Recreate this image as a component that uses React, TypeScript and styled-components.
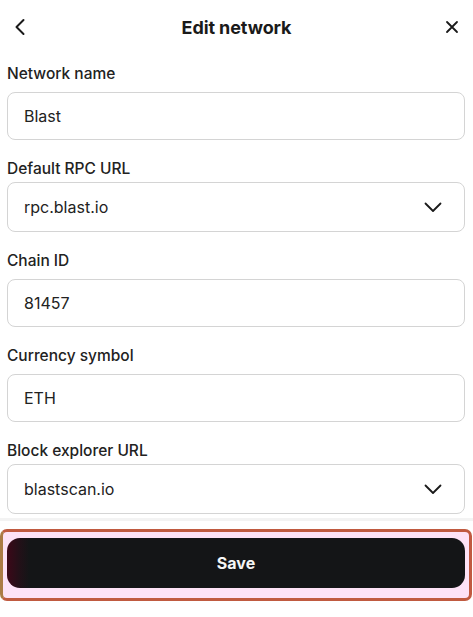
import React, { FunctionComponent } from 'react'
import styled, { createGlobalStyle } from 'styled-components'

const GlobalStyle = createGlobalStyle`
  html, body {
    margin: 0;
    padding: 0;
    background: #fff;
  }
  body {
    font-family: Inter, 'Noto Sans', 'Liberation Sans', sans-serif;
    color: #1f1f1f;
  }
`

const Page = styled.div`
  width: 473px;
  min-height: 617px;
  background: #fff;
  display: flex;
  flex-direction: column;
`

const Header = styled.header`
  height: 54px;
  padding: 0 14px 0 14px;
  display: grid;
  grid-template-columns: 40px 1fr 40px;
  align-items: center;
`

const IconButton = styled.button<{ end?: boolean }>`
  border: 0;
  background: none;
  padding: 0;
  display: flex;
  justify-content: ${(p) => (p.end ? 'flex-end' : 'flex-start')};
  align-items: center;
  color: #1a1a1a;
  cursor: pointer;
`

const Title = styled.h1`
  margin: 0;
  text-align: center;
  font-size: 18px;
  font-weight: 700;
  letter-spacing: -0.1px;
  color: #1a1a1a;
`

const Form = styled.div`
  padding: 10px 8px 0 7px;
  display: flex;
  flex-direction: column;
`

const Field = styled.div`
  display: flex;
  flex-direction: column;
  margin-bottom: 19px;
`

const Label = styled.label<{ select?: boolean }>`
  font-size: 15.5px;
  line-height: 20px;
  font-weight: 450;
  color: #222;
  margin-bottom: ${(p) => (p.select ? '3px' : '8px')};
`

const InputBox = styled.div<{ select?: boolean }>`
  height: ${(p) => (p.select ? '50px' : '48px')};
  box-sizing: border-box;
  border: 1px solid #d4d4d4;
  border-radius: 8px;
  padding: 0 22px 0 16px;
  display: flex;
  align-items: center;
  justify-content: space-between;
  font-size: 16px;
  color: #222;
  background: #fff;
`

const Footer = styled.div`
  margin-top: -15px;
  border-top: 3px solid #f3f3f3;
  padding-top: 8px;
`

const Outline = styled.div`
  border: 3px solid #c05a40;
  border-left-color: #ab7b45;
  border-radius: 7px;
  background: #fde2f6;
  padding: 6px 4px 10px 4px;
  margin-right: 1px;
`

const SaveButton = styled.button`
  width: 100%;
  height: 50px;
  border: 0;
  border-radius: 13px;
  background: linear-gradient(90deg, #3c0818 0px, #231018 12px, #141517 22px, #141517 100%);
  color: #f5f5f5;
  font-family: inherit;
  font-size: 16px;
  font-weight: 700;
  cursor: pointer;
`

const ChevronLeft = () => (
  <svg width='12' height='18' viewBox='0 0 12 18' fill='none'>
    <path d='M9.5 2 L2.5 9 L9.5 16' stroke='currentColor' strokeWidth='2' strokeLinecap='round' strokeLinejoin='round' />
  </svg>
)

const CloseIcon = () => (
  <svg width='14' height='14' viewBox='0 0 14 14' fill='none'>
    <path d='M2 2 L12 12 M12 2 L2 12' stroke='currentColor' strokeWidth='1.8' strokeLinecap='round' />
  </svg>
)

const ChevronDown = () => (
  <svg width='18' height='11' viewBox='0 0 18 11' fill='none'>
    <path d='M1.5 1.5 L9 9 L16.5 1.5' stroke='#1a1a1a' strokeWidth='1.8' strokeLinecap='round' strokeLinejoin='round' />
  </svg>
)

const fields = [
  { label: 'Network name', value: 'Blast', select: false },
  { label: 'Default RPC URL', value: 'rpc.blast.io', select: true },
  { label: 'Chain ID', value: '81457', select: false },
  { label: 'Currency symbol', value: 'ETH', select: false },
  { label: 'Block explorer URL', value: 'blastscan.io', select: true },
]

const App: FunctionComponent = () => {
  return (
    <>
      <GlobalStyle />
      <Page>
        <Header>
          <IconButton>
            <ChevronLeft />
          </IconButton>
          <Title>Edit network</Title>
          <IconButton end>
            <CloseIcon />
          </IconButton>
        </Header>

        <Form>
          {fields.map((f) => (
            <Field key={f.label}>
              <Label select={f.select}>{f.label}</Label>
              <InputBox select={f.select}>
                <span>{f.value}</span>
                {f.select && <ChevronDown />}
              </InputBox>
            </Field>
          ))}
        </Form>

        <Footer>
          <Outline>
            <SaveButton>Save</SaveButton>
          </Outline>
        </Footer>
      </Page>
    </>
  )
}

export default App
